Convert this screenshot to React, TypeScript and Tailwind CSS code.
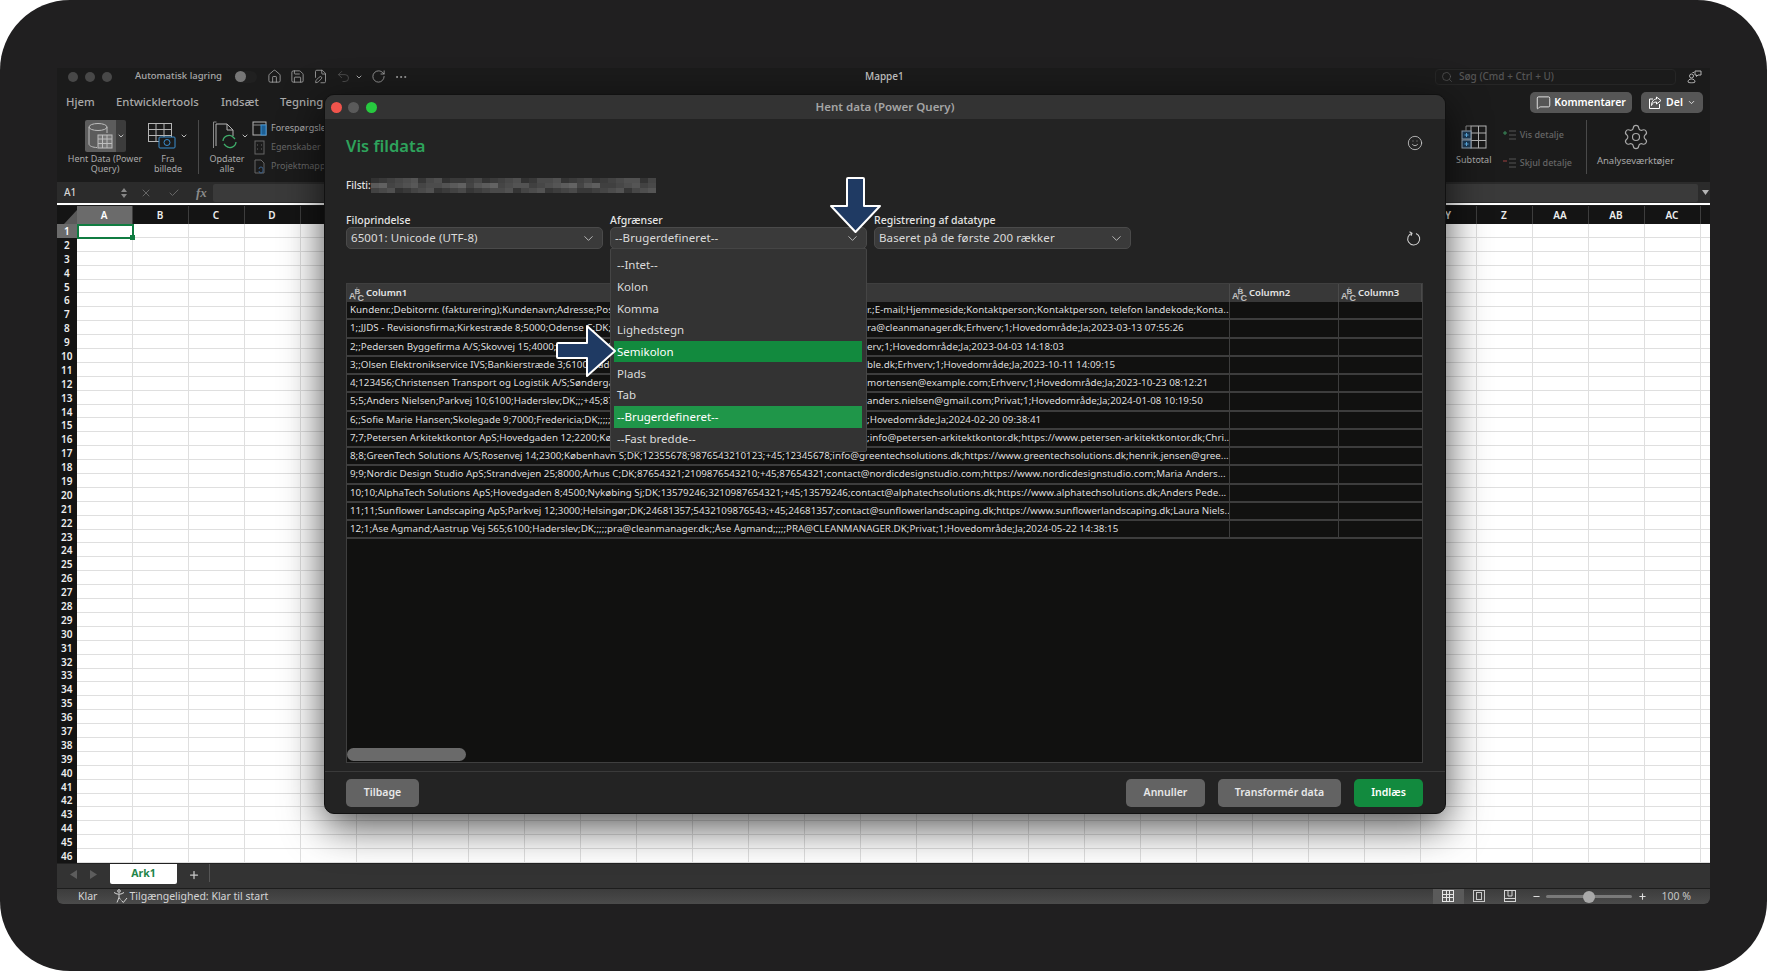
import React from "react";
import { Home, Save, FilePen, Undo2, RotateCw, MoreHorizontal, Search, MessageSquare, ChevronDown, X, Check, Smile, Settings, Plus, Minus } from "lucide-react";

const COLS = ["A","B","C","D","E","F","G","H","I","J","K","L","M","N","O","P","Q","R","S","T","U","V","W","X","Y","Z","AA","AB","AC",""];
const ROWS = Array.from({ length: 46 }, (_, i) => i + 1);
const DELIMS = ["--Intet--","Kolon","Komma","Lighedstegn","Semikolon","Plads","Tab","--Brugerdefineret--","--Fast bredde--"];

const SPLIT_ROWS: [string, string][] = [
  ["Kundenr.;Debitornr. (fakturering);Kundenavn;Adresse;Postnr.;By;Land;CVR-nr.;EAN-nr.;Telefon", "r.;E-mail;Hjemmeside;Kontaktperson;Kontaktperson, telefon landekode;Konta..."],
  ["1;;JJDS - Revisionsfirma;Kirkestræde 8;5000;Odense C;DK;;;;;pra@cleanmanager.dk", "ra@cleanmanager.dk;Erhverv;1;Hovedområde;Ja;2023-03-13 07:55:26"],
  ["2;;Pedersen Byggefirma A/S;Skovvej 15;4000;Roskilde;DK;;;;;;;;;Erhverv", "erv;1;Hovedområde;Ja;2023-04-03 14:18:03"],
  ["3;;Olsen Elektronikservice IVS;Bankierstræde 3;6100;Haderslev;DK;;;;;kontakt@example.dk", "ble.dk;Erhverv;1;Hovedområde;Ja;2023-10-11 14:09:15"],
  ["4;123456;Christensen Transport og Logistik A/S;Søndergade 4;8000;Århus C;DK;;;;;", "mortensen@example.com;Erhverv;1;Hovedområde;Ja;2023-10-23 08:12:21"],
  ["5;5;Anders Nielsen;Parkvej 10;6100;Haderslev;DK;;;+45;87654321;;;;;;;;;;;;;;", "anders.nielsen@gmail.com;Privat;1;Hovedområde;Ja;2024-01-08 10:19:50"],
  ["6;;Sofie Marie Hansen;Skolegade 9;7000;Fredericia;DK;;;;;;;;;;;;;;;;;;;;;;;;;;;;;;;;;;;", ";Hovedområde;Ja;2024-02-20 09:38:41"],
  ["7;7;Petersen Arkitektkontor ApS;Hovedgaden 12;2200;København N;DK;12345678;;;;;;;;;;;", ";info@petersen-arkitektkontor.dk;https://www.petersen-arkitektkontor.dk;Chri..."],
];
const FULL_ROWS = [
  "8;8;GreenTech Solutions A/S;Rosenvej 14;2300;København S;DK;12355678;9876543210123;+45;12345678;info@greentechsolutions.dk;https://www.greentechsolutions.dk;henrik.jensen@gree...",
  "9;9;Nordic Design Studio ApS;Strandvejen 25;8000;Århus C;DK;87654321;2109876543210;+45;87654321;contact@nordicdesignstudio.com;https://www.nordicdesignstudio.com;Maria Anders...",
  "10;10;AlphaTech Solutions ApS;Hovedgaden 8;4500;Nykøbing Sj;DK;13579246;3210987654321;+45;13579246;contact@alphatechsolutions.dk;https://www.alphatechsolutions.dk;Anders Pede...",
  "11;11;Sunflower Landscaping ApS;Parkvej 12;3000;Helsingør;DK;24681357;5432109876543;+45;24681357;contact@sunflowerlandscaping.dk;https://www.sunflowerlandscaping.dk;Laura Niels...",
  "12;1;Åse Ågmand;Aastrup Vej 565;6100;Haderslev;DK;;;;;pra@cleanmanager.dk;;Åse Ågmand;;;;;PRA@CLEANMANAGER.DK;Privat;1;Hovedområde;Ja;2024-05-22 14:38:15",
];

const MOSAIC = Array.from({ length: 108 }, (_, i) => {
  const r = (i * 37 + (i % 7) * 53 + (i % 11) * 29) % 100;
  const mid = i >= 36 && i < 72 ? 14 : 0;
  const v = 50 + Math.round(r * 0.36) + mid;
  return `rgb(${v},${v},${v})`;
});

function AbcIcon() {
  return (
    <svg width="15" height="15" viewBox="0 0 15 15" className="shrink-0" fill="#c2c2c2" fontFamily="Liberation Sans, sans-serif">
      <text x="0" y="13" fontSize="9">A</text>
      <text x="5.500" y="7.500" fontSize="8">B</text>
      <text x="8.500" y="14.500" fontSize="9">C</text>
      <path d="M6 14 L8 1" stroke="#9a9a9a" strokeWidth="0.6" />
    </svg>
  );
}

function PowerQueryIcon() {
  return (
    <svg width="26" height="28" viewBox="0 0 26 28" fill="none" stroke="#bdbdbd" strokeWidth="1">
      <path d="M2 5v17c0 2 4 3.500 8 3.500M20 5v6" />
      <ellipse cx="11" cy="5" rx="9" ry="3.500" />
      <rect x="11" y="13" width="14" height="13" fill="#777" />
      <path d="M11 17h14M11 21.500h14M15.500 13v13M20 13v13" />
    </svg>
  );
}
function FromImageIcon() {
  return (
    <svg width="30" height="28" viewBox="0 0 30 28" fill="none" strokeWidth="1">
      <g stroke="#b5b5b5">
        <rect x="0.500" y="1.500" width="23" height="18" />
        <path d="M0.500 7.500h23M0.500 13.500h23M8 1.500v18M16 1.500v18" />
      </g>
      <rect x="11" y="15" width="16" height="11" rx="1" fill="#1b1b1b" stroke="#3b8fd0" />
      <circle cx="19" cy="20.500" r="3" stroke="#3b8fd0" />
    </svg>
  );
}
function RefreshAllIcon() {
  return (
    <svg width="26" height="30" viewBox="0 0 26 30" fill="none" strokeWidth="1">
      <path d="M3 25V3h11l6 6v6" stroke="#b5b5b5" />
      <path d="M0.500 27V1h3" stroke="#8a8a8a" />
      <path d="M14 3v6h6" stroke="#b5b5b5" />
      <path d="M10 20a6 6 0 0 1 10-4l2 2M23 21a6 6 0 0 1-10 4l-2-2" stroke="#3fae6b" strokeWidth="1.300" />
    </svg>
  );
}
function SmallRibbonIcon({ kind }: { kind: number }) {
  if (kind === 0)
    return (
      <svg width="15" height="15" viewBox="0 0 15 15" fill="none" stroke="#b5b5b5">
        <rect x="1" y="1" width="13" height="13" />
        <path d="M1 4h13" stroke="#8a8a8a" />
        <rect x="9" y="4" width="5" height="10" fill="#1d5f94" stroke="#3b8fd0" />
      </svg>
    );
  if (kind === 1)
    return (
      <svg width="15" height="15" viewBox="0 0 15 15" fill="none" stroke="#666">
        <rect x="3" y="1" width="9" height="13" />
        <path d="M5 5h1M9 5h1M5 9h1M9 9h1" />
      </svg>
    );
  return (
    <svg width="15" height="15" viewBox="0 0 15 15" fill="none" stroke="#666">
      <path d="M3 14V1h6l3 3v10z" />
      <path d="M7 10a2 2 0 0 1 4 0v2a2 2 0 0 1-4 0" stroke="#3a5f88" />
    </svg>
  );
}
function SubtotalIcon() {
  return (
    <svg width="26" height="24" viewBox="0 0 26 24" fill="none" stroke="#b5b5b5">
      <rect x="10" y="1" width="15" height="22" />
      <path d="M10 8h15M10 15.500h15M17.500 1v22" />
      <rect x="1" y="6" width="9" height="8" fill="#1d3a55" stroke="#9ab" />
      <rect x="1" y="15" width="9" height="8" fill="#1d3a55" stroke="#9ab" />
      <path d="M3.500 10h4M5.500 8v4M3.500 19h4M5.500 17v4" stroke="#5fb4ee" />
      <path d="M5 6V1h5" stroke="#888" />
    </svg>
  );
}
function DetailIcon({ color, plus }: { color: string; plus: boolean }) {
  return (
    <svg width="14" height="12" viewBox="0 0 14 12" fill="none" strokeWidth="1">
      <path d="M7 2h7M7 6h7M7 10h7" stroke="#555" />
      <path d={plus ? "M1 4h4M3 2v4" : "M1 4h4"} stroke={color} />
    </svg>
  );
}
function AccessIcon() {
  return (
    <svg width="15" height="15" viewBox="0 0 15 15" fill="none" stroke="#d5d5d5">
      <circle cx="6" cy="2" r="1.300" />
      <path d="M1 3.500l3 1.500h4l3-1.500M6 5v3.500l-2 5M6 8.500l1.500 2" />
      <path d="M8.500 11.500l1.800 2L14 9" />
    </svg>
  );
}
function ShareIcon() {
  return (
    <svg width="14" height="14" viewBox="0 0 14 14" fill="none" stroke="#fff" strokeWidth="1">
      <path d="M5 3H1.500v9.500h10V8" />
      <path d="M8.500 1l4.500 3.500L8.500 8V6C6 6 4.500 7 3.500 9.500 3.500 6 5.500 3 8.500 3z" />
    </svg>
  );
}
function PeopleIcon() {
  return (
    <svg width="15" height="15" viewBox="0 0 15 15" fill="none" stroke="#b5b5b5" strokeWidth="1">
      <circle cx="4.500" cy="7" r="2" />
      <path d="M1 13c0-2 1.500-3 3.500-3S8 11 8 13c0 1-7 1-7 0z" />
      <path d="M8 2h6v4h-3l-1.500 1.500V6H8zM5.500 3.500H7" />
    </svg>
  );
}
function ReloadIcon() {
  return (
    <svg width="15" height="15" viewBox="0 0 15 15" fill="none" stroke="#cfcfcf" strokeWidth="1.100" className="ml-auto mr-[3px] mt-[18px]">
      <path d="M6 2.200A6 6 0 1 0 10 2.400" />
      <path d="M3.500 0.800L6 2.200 5 4.800" />
    </svg>
  );
}

function ExcelRibbon() {
  return (
    <div className="h-[60px] flex justify-between text-[#a9a9a9]">
      <div className="flex items-start">
        <div className="w-[80px] ml-[8px] flex flex-col items-center">
          <div className="flex h-[32px]">
            <div className="w-[31px] bg-[#5c5c5c] rounded-l-[2px] flex items-center justify-center"><PowerQueryIcon /></div>
            <div className="w-[10px] bg-[#3c3c3c] rounded-r-[2px] flex items-center justify-center"><ChevronDown size={8} strokeWidth={3} color="#bbb" /></div>
          </div>
          <div className="text-[9px] leading-[10px] text-center mt-[2px] w-[80px]">Hent Data (Power Query)</div>
        </div>
        <div className="w-[50px] -ml-[2px] flex flex-col items-center">
          <div className="flex h-[32px] items-center gap-[2px]">
            <FromImageIcon />
            <ChevronDown size={8} strokeWidth={3} color="#bbb" />
          </div>
          <div className="text-[9px] leading-[10px] text-center mt-[2px]">Fra<br />billede</div>
        </div>
        <div className="w-px h-[54px] bg-[#4a4a4a] ml-[5px] mr-[8px]" />
        <div className="w-[40px] flex flex-col items-center">
          <div className="flex h-[32px] items-center gap-[2px] ml-[8px]">
            <RefreshAllIcon />
            <ChevronDown size={8} strokeWidth={3} color="#bbb" />
          </div>
          <div className="text-[9px] leading-[10px] text-center mt-[2px]">Opdater<br />alle</div>
        </div>
        <div className="flex flex-col gap-[3px] ml-[5px] text-[9px] leading-[16px]">
          <div className="flex items-center gap-[4px]"><SmallRibbonIcon kind={0} />Forespørgsler</div>
          <div className="flex items-center gap-[4px] text-[#666]"><SmallRibbonIcon kind={1} />Egenskaber</div>
          <div className="flex items-center gap-[4px] text-[#666]"><SmallRibbonIcon kind={2} />Projektmappelinks</div>
        </div>
      </div>
      <div className="flex items-start pr-[26px]">
        <div className="w-[48px] flex flex-col items-center mt-[5px]">
          <SubtotalIcon />
          <div className="text-[9px] leading-[11px] mt-[5px]">Subtotal</div>
        </div>
        <div className="flex flex-col gap-[15px] ml-[4px] mt-[8px] text-[9px] leading-[13px] font-medium text-[#666]">
          <div className="flex items-center gap-[4px]"><DetailIcon color="#3a8a5a" plus />Vis detalje</div>
          <div className="flex items-center gap-[4px]"><DetailIcon color="#a04040" plus={false} />Skjul detalje</div>
        </div>
        <div className="w-px h-[54px] bg-[#4a4a4a] ml-[14px]" />
        <div className="w-[97px] flex flex-col items-center mt-[3px]">
          <Settings size={28} strokeWidth={1} color="#a9a9a9" />
          <div className="text-[9.500px] leading-[11px] mt-[4px]">Analyseværktøjer</div>
        </div>
      </div>
    </div>
  );
}

function SheetGrid() {
  return (
    <div className="relative overflow-hidden shrink-0">
      <div className="flex h-[18px] bg-[#141414]">
        <div className="w-[19.500px] shrink-0 flex items-end justify-end">
          <svg width="13" height="14" viewBox="0 0 13 14"><path d="M13 0V14H0z" fill="#5a5a5a" /></svg>
        </div>
        {COLS.map((c, i) => (
          <div key={i} className={`w-[56px] shrink-0 border-r border-[#3d3d3d] flex items-center justify-center text-[10px] font-semibold ${i === 0 ? "bg-[#6b6b6b] text-white" : "text-[#eee]"}`}>{c}</div>
        ))}
      </div>
      {ROWS.map((r) => (
        <div key={r} className="flex h-[13.900px]">
          <div className={`w-[19.500px] shrink-0 flex items-center justify-center text-[10px] leading-none font-semibold ${r === 1 ? "bg-[#6b6b6b] text-white" : "bg-[#141414] text-[#eee]"}`}>{r}</div>
          {COLS.map((_, i) => (
            <div key={i} className="w-[56px] shrink-0 bg-white border-r border-b border-[#dfdfdf]" />
          ))}
        </div>
      ))}
      <div className="absolute left-[19.500px] top-[18px] w-[57px] h-[15px] border-2 border-[#107c41]">
        <div className="absolute -right-[3px] -bottom-[3px] w-[5px] h-[5px] bg-[#107c41]" />
      </div>
    </div>
  );
}

function ExcelWindow() {
  return (
    <div className="h-[836px] bg-[#1b1b1b] rounded-b-[6px] overflow-hidden flex flex-col">
      <div className="h-[17px] shrink-0 flex items-center text-[#a9a9a9]">
        <div className="flex gap-[7px] ml-[11px]">
          <span className="w-[10px] h-[10px] rounded-full bg-[#484848]" />
          <span className="w-[10px] h-[10px] rounded-full bg-[#484848]" />
          <span className="w-[10px] h-[10px] rounded-full bg-[#484848]" />
        </div>
        <span className="ml-[23px] text-[9.500px] font-medium">Automatisk lagring</span>
        <span className="ml-[13px] w-[22px] h-[12px] rounded-full bg-[#202020] flex items-center"><span className="w-[11px] h-[11px] rounded-full bg-[#777]" /></span>
        <div className="flex items-center ml-[10px] gap-[8px]">
          <Home size={15} strokeWidth={1.300} />
          <Save size={15} strokeWidth={1.300} />
          <FilePen size={15} strokeWidth={1.300} />
          <Undo2 size={15} strokeWidth={1.300} color="#555" />
          <ChevronDown size={8} strokeWidth={3} className="-ml-[4px]" />
          <RotateCw size={15} strokeWidth={1.300} />
          <MoreHorizontal size={14} strokeWidth={1.500} />
        </div>
        <span className="ml-[457px] text-[10px] font-medium text-[#c5c5c5]">Mappe1</span>
        <div className="ml-auto w-[241px] h-[16px] border border-[#262626] rounded-[4px] flex items-center pl-[5px] gap-[6px] text-[10px] font-medium text-[#555]">
          <Search size={12} strokeWidth={1.500} />Søg (Cmd + Ctrl + U)
        </div>
        <span className="ml-[11px] mr-[8px]"><PeopleIcon /></span>
      </div>
      <div className="h-[35px] shrink-0 flex items-center justify-between pl-[9px] pr-[7px]">
        <div className="flex text-[11.300px] font-medium text-[#a9a9a9]">
          <span className="w-[50px]">Hjem</span>
          <span className="w-[105px]">Entwicklertools</span>
          <span className="w-[59px]">Indsæt</span>
          <span>Tegning</span>
        </div>
        <div className="flex gap-[9px] text-[10.500px] font-semibold text-white">
          <span className="w-[102px] h-[21px] rounded-[5px] bg-[#565656] flex items-center justify-center gap-[3px]"><MessageSquare size={15} strokeWidth={1.300} />Kommentarer</span>
          <span className="w-[62px] h-[21px] rounded-[5px] bg-[#565656] flex items-center justify-center gap-[4px]"><ShareIcon />Del<ChevronDown size={9} strokeWidth={2} /></span>
        </div>
      </div>
      <ExcelRibbon />
      <div className="h-[21px] shrink-0 mt-[2px] bg-[#2b2b2b] flex items-center text-[#a9a9a9]">
        <span className="w-[59px] pl-[7px] text-[10px] font-medium text-[#d5d5d5]">A1</span>
        <span className="w-[15px] flex flex-col items-center gap-[2px]">
          <svg width="6" height="4"><path d="M3 0l3 4H0z" fill="#888" /></svg>
          <svg width="6" height="4"><path d="M3 4l3-4H0z" fill="#888" /></svg>
        </span>
        <div className="flex items-center gap-[16px] ml-[9px] mr-[6px]">
          <X size={12} color="#666" />
          <Check size={12} color="#666" />
          <span className="text-[13px] italic font-semibold text-[#8a8a8a]" style={{ fontFamily: "Liberation Serif, serif" }}>fx</span>
        </div>
        <div className="w-[1485px] h-[18px] bg-[#3a3a3a] rounded-[2px]" />
        <svg className="ml-[4px]" width="7" height="5"><path d="M0 0h7L3.500 5z" fill="#b5b5b5" /></svg>
      </div>
      <div className="h-[3px] shrink-0 bg-white border-b border-[#1b1b1b]" />
      <SheetGrid />
      <div className="h-[25px] shrink-0 bg-[#333333] flex items-start border-t border-[#222]">
        <div className="w-[53px] flex justify-center items-center gap-[13px] h-[22px] text-[#666]">
          <svg width="7" height="9"><path d="M7 0v9L0 4.500z" fill="#5d5d5d" /></svg>
          <svg width="7" height="9"><path d="M0 0v9l7-4.500z" fill="#5d5d5d" /></svg>
        </div>
        <div className="w-[67px] h-[20px] bg-white rounded-b-[2px] flex items-center justify-center text-[10.500px] font-bold text-[#1e8449]">Ark1</div>
        <Plus size={12} strokeWidth={2.500} color="#c9c9c9" className="ml-[11px] mt-[5px]" />
        <div className="w-px h-[18px] bg-[#555] ml-[9px]" />
      </div>
      <div className="h-[16px] shrink-0 bg-gradient-to-b from-[#3c3c3c] to-[#4b4b4b] border-t border-[#1d1d1d] flex items-center text-[10.500px] text-[#d5d5d5]">
        <span className="ml-[21px]">Klar</span>
        <span className="ml-[16px] mr-[1px]"><AccessIcon /></span>
        <span>Tilgængelighed: Klar til start</span>
        <div className="ml-auto flex items-center h-full">
          <span className="w-[31px] h-full bg-[#5a5a5a] flex items-center justify-center">
            <svg width="12" height="12" fill="none" stroke="#e5e5e5"><rect x=".5" y=".5" width="11" height="11" /><path d="M4.500 0v12M7.500 0v12M0 4.500h12M0 7.500h12" /></svg>
          </span>
          <span className="w-[31px] flex justify-center">
            <svg width="12" height="12" fill="none" stroke="#c9c9c9"><rect x=".5" y=".5" width="11" height="11" /><rect x="3.500" y="2.500" width="5" height="7" /></svg>
          </span>
          <span className="w-[31px] flex justify-center">
            <svg width="12" height="12" fill="none" stroke="#d5d5d5"><rect x=".5" y=".5" width="11" height="11" /><path d="M4 0v6h4V0M0 8.500h12" /></svg>
          </span>
          <Minus size={9} strokeWidth={3} color="#ddd" className="ml-[6px]" />
          <div className="relative w-[86px] h-[3px] bg-[#7a7a7a] rounded-full ml-[5px]">
            <div className="absolute left-[37px] -top-[4px] w-[12px] h-[12px] rounded-full bg-[#a9a9a9]" />
          </div>
          <Plus size={9} strokeWidth={3} color="#ddd" className="ml-[6px]" />
          <span className="ml-[15px] mr-[19px] text-[#c5c5c5]">100 %</span>
        </div>
      </div>
    </div>
  );
}

function SelectBox({ label, value }: { label: string; value: string }) {
  return (
    <div className="w-[257px]">
      <div className="h-[14px] text-[10.500px] leading-[14px] font-medium text-[#e5e5e5]">{label}</div>
      <div className="h-[22px] bg-[#3a3a3a] border border-[#4a4a4a] rounded-[5px] flex items-center justify-between pl-[4px] pr-[6px] text-[11.500px] text-[#dcdcdc] tracking-[0.1px]">
        <span>{value}</span>
        <ChevronDown size={15} strokeWidth={1.200} color="#dddddd" />
      </div>
    </div>
  );
}

function DataRow({ children }: { children: React.ReactNode }) {
  return (
    <div className="flex h-[18.250px] text-[9.800px] leading-[16px] text-[#dedede]">
      <div className="w-[883px] pl-[3px] border-r border-b-2 border-[#3d3d3d] overflow-hidden whitespace-nowrap flex">{children}</div>
      <div className="w-[109px] border-r border-b-2 border-[#3d3d3d]" />
      <div className="flex-1 border-b-2 border-[#3d3d3d]" />
    </div>
  );
}

function PreviewTable() {
  const head = ["Column1", "Column2", "Column3"];
  const widths = ["w-[883px]", "w-[109px]", "flex-1"];
  return (
    <div className="relative ml-[21px] mr-[22px] h-[480px] bg-[#111110] border border-[#3f3f3f] overflow-hidden">
      <div className="flex h-[18px] bg-[#383838]">
        {head.map((h, i) => (
          <div key={h} className={`${widths[i]} border-r border-[#4a4a4a] flex items-center pl-[2px] gap-[2px] text-[9.500px] font-semibold text-[#e5e5e5]`}>
            <AbcIcon />{h}
          </div>
        ))}
      </div>
      {SPLIT_ROWS.map(([l, r], i) => (
        <DataRow key={i}>
          <span className="w-[517px] shrink-0 overflow-hidden">{l}</span>
          <span>{r}</span>
        </DataRow>
      ))}
      {FULL_ROWS.map((t, i) => (
        <DataRow key={i}><span>{t}</span></DataRow>
      ))}
      <div className="absolute left-0 bottom-[1px] w-[119px] h-[13px] rounded-full bg-[#6a6a6a]" />
    </div>
  );
}

function Dialog() {
  return (
    <div className="absolute left-[324px] top-[94px] w-[1122px] h-[720px] rounded-[10px] bg-[#232323] border border-[#111] shadow-[0_12px_40px_rgba(0,0,0,0.7)] flex flex-col overflow-hidden">
      <div className="h-[24px] shrink-0 bg-[#333333] flex items-center">
        <div className="flex gap-[6.300px] ml-[6px]">
          <span className="w-[11px] h-[11px] rounded-full bg-[#f0544c]" />
          <span className="w-[11px] h-[11px] rounded-full bg-[#5a5a5a]" />
          <span className="w-[11px] h-[11px] rounded-full bg-[#27c93f]" />
        </div>
        <span className="ml-[439px] text-[11.500px] font-semibold text-[#a5a5a5]">Hent data (Power Query)</span>
      </div>
      <div className="flex justify-between items-start pl-[21px] pr-[22px] mt-[15px]">
        <span className="text-[16.500px] leading-[24px] font-semibold text-[#2ea35c]">Vis fildata</span>
        <Smile size={16} strokeWidth={1.200} color="#d0d0d0" className="mt-[1px]" />
      </div>
      <div className="flex items-center px-[21px] mt-[20px] h-[15px]">
        <span className="w-[25px] text-[10px] font-medium text-[#e5e5e5]">Filsti:</span>
        <div className="grid grid-cols-[repeat(36,7.920px)] grid-rows-[repeat(3,5px)]">
          {MOSAIC.map((c, i) => <span key={i} style={{ background: c }} />)}
        </div>
      </div>
      <div className="flex px-[21px] gap-[7px] mt-[20px]">
        <SelectBox label="Filoprindelse" value="65001: Unicode (UTF-8)" />
        <SelectBox label="Afgrænser" value="--Brugerdefineret--" />
        <SelectBox label="Registrering af datatype" value="Baseret på de første 200 rækker" />
        <ReloadIcon />
      </div>
      <div className="mt-[34px]"><PreviewTable /></div>
      <div className="mt-[8px] flex-1 border-t border-[#3a3a3a] flex items-center pl-[21px] pr-[22px] gap-[13px] text-[10.500px] font-semibold text-[#e8e8e8]">
        <button className="w-[73px] h-[28px] rounded-[5px] bg-[#636363]">Tilbage</button>
        <button className="w-[79px] h-[28px] rounded-[5px] bg-[#636363] ml-auto">Annuller</button>
        <button className="w-[123px] h-[28px] rounded-[5px] bg-[#636363]">Transformér data</button>
        <button className="w-[69px] h-[28px] rounded-[5px] bg-[#128a3e] text-white">Indlæs</button>
      </div>
      <div className="absolute left-[285px] top-[153px] w-[257px] h-[204px] bg-[#333333] border border-[#454545] rounded-[2px] pt-[5px] pl-[3px] pr-[4px] text-[11.500px] text-[#dcdcdc]">
        {DELIMS.map((d) => (
          <div key={d} className={`h-[21.700px] pl-[3px] flex items-center ${d === "Semikolon" ? "bg-[#128a3e] text-white" : d === "--Brugerdefineret--" ? "bg-[#1f9649] text-white" : ""}`}>{d}</div>
        ))}
      </div>
    </div>
  );
}

function DownArrow() {
  return (
    <svg className="absolute left-[826px] top-[172px]" width="60" height="66" viewBox="0 0 60 66">
      <path d="M22 6h15a1 1 0 0 1 1 1v27h16L29.500 60 5 34h16V7a1 1 0 0 1 1-1z" fill="#1f3a63" stroke="#fff" strokeWidth="2" strokeLinejoin="round" />
    </svg>
  );
}
function RightArrow() {
  return (
    <svg className="absolute left-[552px] top-[320px]" width="68" height="62" viewBox="0 0 68 62">
      <path d="M6 23h29V6l28 25-28 25V38H6a1 1 0 0 1-1-1V24a1 1 0 0 1 1-1z" fill="#1f3a63" stroke="#fff" strokeWidth="2" strokeLinejoin="round" />
    </svg>
  );
}

export default function App() {
  return (
    <div className="w-[1767px] h-[971px] bg-white overflow-hidden" style={{ fontFamily: '"Noto Sans", sans-serif' }}>
      <div className="relative w-full h-full rounded-[70px] bg-[#201f20] pt-[68px] px-[57px]">
        <ExcelWindow />
        <Dialog />
        <DownArrow />
        <RightArrow />
      </div>
    </div>
  );
}
